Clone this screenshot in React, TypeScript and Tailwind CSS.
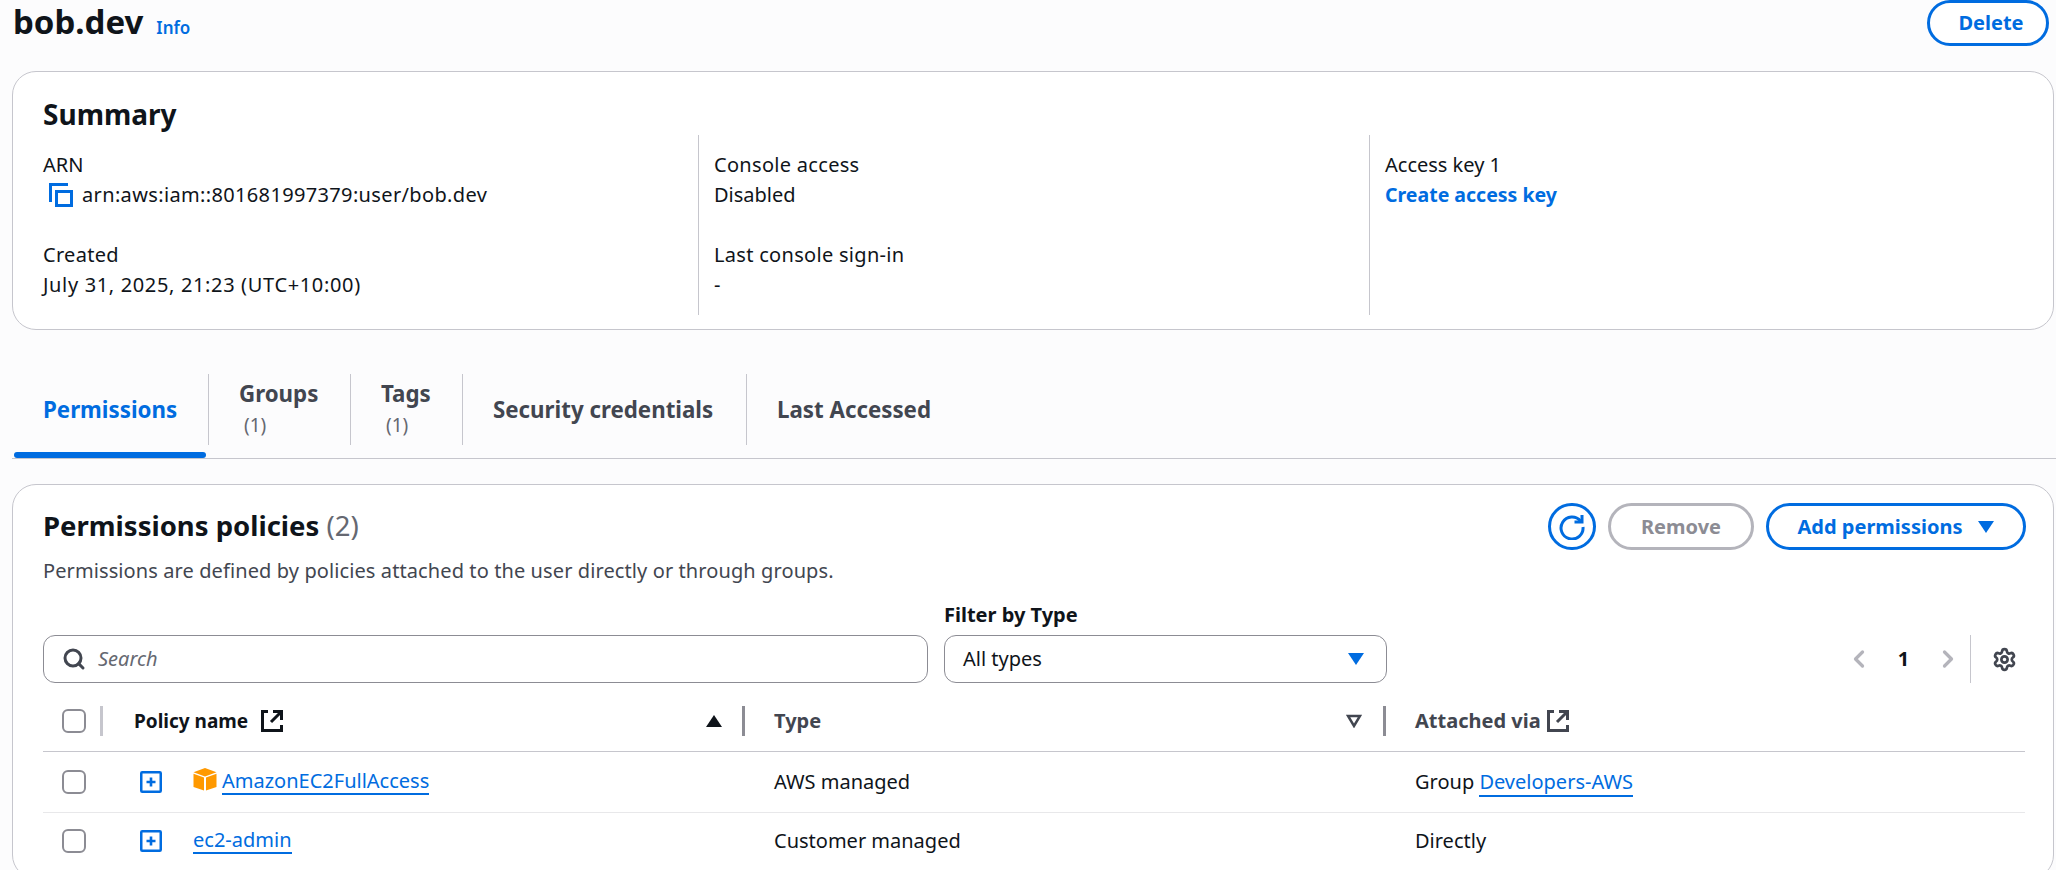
import { Search, ChevronLeft, ChevronRight, Settings } from "lucide-react";
import type { ReactNode } from "react";

const Copy = () => (
  <svg width="24" height="24" viewBox="0 0 24 24" fill="none" stroke="#006ce0" strokeWidth="3" className="shrink-0">
    <path d="M1.5 19V1.5H19" />
    <rect x="7.5" y="8.5" width="15" height="14" />
  </svg>
);

const External = ({ color }: { color: string }) => (
  <svg width="22" height="22" viewBox="0 0 22 22" fill="none" stroke={color} strokeWidth="3" className="shrink-0">
    <path d="M7 1.5H1.5V20.5H20.5V15" />
    <path d="M12 1.5H20.5V10" />
    <path d="M20 2L10 12" />
  </svg>
);

const Expand = () => (
  <svg width="22" height="22" viewBox="0 0 22 22" fill="none" stroke="#006ce0" className="shrink-0">
    <rect x="1.25" y="1.25" width="19.5" height="19.5" strokeWidth="2.5" rx="1" />
    <path d="M6.5 11H15.5M11 6.5V15.5" strokeWidth="2.6" />
  </svg>
);

const Cube = () => (
  <svg width="24" height="23" viewBox="0 0 24 23" className="shrink-0">
    <path d="M12 0L23.5 4.2L12 8.4L0.5 4.2Z" fill="#f90" />
    <path d="M0.5 5.8L11 9.6V22.5L0.5 19Z" fill="#f90" />
    <path d="M23.5 5.8L13 9.6V22.5L23.5 19Z" fill="#f90" />
  </svg>
);

const Refresh = () => (
  <svg width="26" height="26" viewBox="0 0 26 26" fill="none" stroke="#006ce0" strokeWidth="3">
    <path d="M21.5 7A11 11 0 1 0 24 13" />
    <path d="M23 1V8H15.5" />
  </svg>
);

const Caret = ({ color = "#006ce0" }: { color?: string }) => (
  <svg width="16" height="12" viewBox="0 0 16 12" className="shrink-0">
    <path d="M0 0H16L8 12Z" fill={color} />
  </svg>
);

const Check = () => <span className="block h-[24px] w-[24px] rounded-[6px] border-2 border-[#8c8c94] bg-white" />;

const Label = ({ t, v, vc = "" }: { t: string; v: string; vc?: string }) => (
  <div>
    <div className="leading-[30px] tracking-[0.3px]">{t}</div>
    <div className={`leading-[30px] ${vc}`}>{v}</div>
  </div>
);

const Link = ({ children }: { children: string }) => (
  <span className="border-b-2 border-[#006ce0] leading-[24px] text-[#006ce0]">{children}</span>
);

const Tab = ({ w, pl, t, n }: { w: string; pl: string; t: string; n?: boolean }) => (
  <div className={`flex h-[71px] flex-col justify-center border-l border-[#c6c6cd] ${w} ${pl}`}>
    <div className="text-[22.3px] leading-[30px] font-bold text-[#424650]">{t}</div>
    {n && <div className="mt-[1px] ml-[5px] text-[19px] leading-[30px] text-[#656871]">(1)</div>}
  </div>
);

export default function App() {
  return (
    <div className="h-[870px] w-[2056px] overflow-hidden bg-[#fcfcfd] font-['Noto_Sans',sans-serif] text-[20px] text-[#0f141a]">
      <header className="flex h-[71px] items-start justify-between pr-[7px] pl-[13px]">
        <div className="flex items-baseline gap-[13px]">
          <h1 className="text-[33px] leading-[44px] font-bold">bob.dev</h1>
          <span className="text-[17px] font-semibold text-[#006ce0]">Info</span>
        </div>
        <button className="flex h-[46px] w-[122px] items-center justify-center rounded-full border-[3px] border-[#006ce0] bg-white pl-[6px] text-[20px] font-bold text-[#006ce0]">
          Delete
        </button>
      </header>

      <section className="mr-[2px] ml-[12px] h-[259px] rounded-[24px] border border-[#c6c6cd] bg-white px-[30px]">
        <h2 className="pt-[23px] text-[28px] leading-[38px] font-bold">Summary</h2>
        <div className="mt-[2px] grid grid-cols-[655px_671px_1fr]">
          <div className="flex h-[180px] flex-col gap-[30px] pt-[15px]">
            <div>
              <div className="leading-[30px]">ARN</div>
              <div className="flex items-center gap-[9px] pl-[6px] leading-[30px]">
                <Copy />
                <span className="tracking-[0.35px]">arn:aws:iam::801681997379:user/bob.dev</span>
              </div>
            </div>
            <Label t="Created" v="July 31, 2025, 21:23 (UTC+10:00)" vc="tracking-[0.65px]" />
          </div>
          <div className="flex h-[180px] flex-col gap-[30px] border-l border-[#c6c6cd] pt-[15px] pl-[15px]">
            <Label t="Console access" v="Disabled" />
            <Label t="Last console sign-in" v="-" />
          </div>
          <div className="h-[180px] border-l border-[#c6c6cd] pt-[15px] pl-[15px]">
            <div className="leading-[30px]">Access key 1</div>
            <div className="text-[19.5px] leading-[30px] font-bold text-[#006ce0]">Create access key</div>
          </div>
        </div>
      </section>

      <nav className="mt-[44px] ml-[12px]">
        <div className="flex">
          <div className="flex h-[71px] w-[196px] items-center pl-[31px] text-[22.3px] font-bold text-[#006ce0]">Permissions</div>
          <Tab w="w-[142px]" pl="pl-[30px]" t="Groups" n />
          <Tab w="w-[112px]" pl="pl-[30px]" t="Tags" n />
          <Tab w="w-[284px]" pl="pl-[30px]" t="Security credentials" />
          <Tab w="w-[240px]" pl="pl-[30px]" t="Last Accessed" />
        </div>
        <div className="mt-[7px] border-b border-[#c6c6cd]">
          <div className="ml-[2px] h-[6px] w-[192px] rounded-full bg-[#006ce0]" />
        </div>
      </nav>

      <section className="mt-[25px] mr-[2px] ml-[12px] h-[395px] rounded-[24px] border border-[#c6c6cd] bg-white pr-[27px] pl-[30px]">
        <div className="flex items-start justify-between pt-[18px]">
          <div>
            <h2 className="pt-[4px] text-[27.5px] leading-[38px] font-bold">
              Permissions policies <span className="font-normal text-[#656871]">(2)</span>
            </h2>
            <p className="mt-[13px] text-[20px] leading-[26px] tracking-[0.1px] text-[#424650]">Permissions are defined by policies attached to the user directly or through groups.</p>
          </div>
          <div className="flex items-center gap-[12px]">
            <button className="flex h-[47px] w-[48px] items-center justify-center rounded-full border-[3px] border-[#006ce0]">
              <Refresh />
            </button>
            <button className="h-[47px] w-[146px] rounded-full border-[3px] border-[#b4b4bb] font-bold text-[#8c8c94]">Remove</button>
            <button className="flex h-[47px] w-[260px] items-center justify-center gap-[16px] rounded-full border-[3px] border-[#006ce0] font-bold text-[#006ce0]">
              Add permissions <Caret />
            </button>
          </div>
        </div>

        <div className="mt-[18px] flex items-end">
          <div className="flex h-[48px] w-[885px] items-center gap-[12px] rounded-[12px] border border-[#8c8c94] pl-[18px] italic text-[#656871]">
            <Search size={24} strokeWidth={3} className="shrink-0 text-[#424650]" />
            Search
          </div>
          <div className="ml-[16px] w-[443px]">
            <div className="mb-[7px] leading-[26px] font-bold">Filter by Type</div>
            <div className="flex h-[48px] items-center justify-between rounded-[12px] border border-[#8c8c94] pr-[22px] pl-[18px]">
              All types <Caret />
            </div>
          </div>
          <div className="ml-auto flex h-[48px] items-center">
            <ChevronLeft size={28} strokeWidth={2.8} className="text-[#b4b4bb]" />
            <span className="w-[61px] text-center font-bold">1</span>
            <ChevronRight size={28} strokeWidth={2.8} className="text-[#b4b4bb]" />
            <span className="mr-[21px] ml-[8px] h-[48px] border-l border-[#c6c6cd]" />
            <Settings size={25} strokeWidth={2.6} className="text-[#424650]" />
            <span className="w-[9px]" />
          </div>
        </div>

        <div className="mr-[1px] grid h-[69px] grid-cols-[60px_31px_611px_29px_612px_29px_1fr] items-center border-b border-[#c6c6cd] pt-[8px] font-bold">
          <div className="flex items-center justify-between pl-[19px]"><Check /><span className="h-[30px] border-l-[3px] border-[#c6c6cd]" /></div>
          <span />
          <div className="flex items-center justify-between gap-[8px]">
            <span className="flex items-center gap-[13px] text-[19px]">Policy name <External color="#0f141a" /></span>
            <span className="flex items-center gap-[20px]">
              <svg width="16" height="12" viewBox="0 0 16 12"><path d="M8 0L16 12H0Z" fill="#0f141a" /></svg>
              <span className="h-[30px] border-l-[3px] border-[#8c8c94]" />
            </span>
          </div>
          <span />
          <div className="flex items-center justify-between text-[#424650]">
            <span>Type</span>
            <span className="flex items-center gap-[21px]">
              <svg width="16" height="14" viewBox="0 0 16 14" fill="none" stroke="#424650" strokeWidth="2.5"><path d="M2 2H14L8 12Z" /></svg>
              <span className="h-[30px] border-l-[3px] border-[#8c8c94]" />
            </span>
          </div>
          <span />
          <span className="flex items-center gap-[6px] text-[#424650]">Attached via <External color="#424650" /></span>
        </div>

        <Row h="h-[61px]" name="AmazonEC2FullAccess" cube type="AWS managed" via={<>Group <Link>Developers-AWS</Link></>} border />
        <Row h="h-[56px]" name="ec2-admin" type="Customer managed" via="Directly" />
      </section>
    </div>
  );
}

function Row({ h, name, cube, type, via, border }: { h: string; name: string; cube?: boolean; type: string; via: ReactNode; border?: boolean }) {
  return (
    <div className={`mr-[1px] grid grid-cols-[97px_53px_581px_641px_1fr] items-center ${h} ${border ? "border-b border-[#e8e8ea]" : ""}`}>
      <div className="pl-[19px]"><Check /></div>
      <Expand />
      <div className="flex items-center gap-[5px]">
        {cube && <span className="-mt-[6px]"><Cube /></span>}
        <Link>{name}</Link>
      </div>
      <span>{type}</span>
      <span>{via}</span>
    </div>
  );
}
